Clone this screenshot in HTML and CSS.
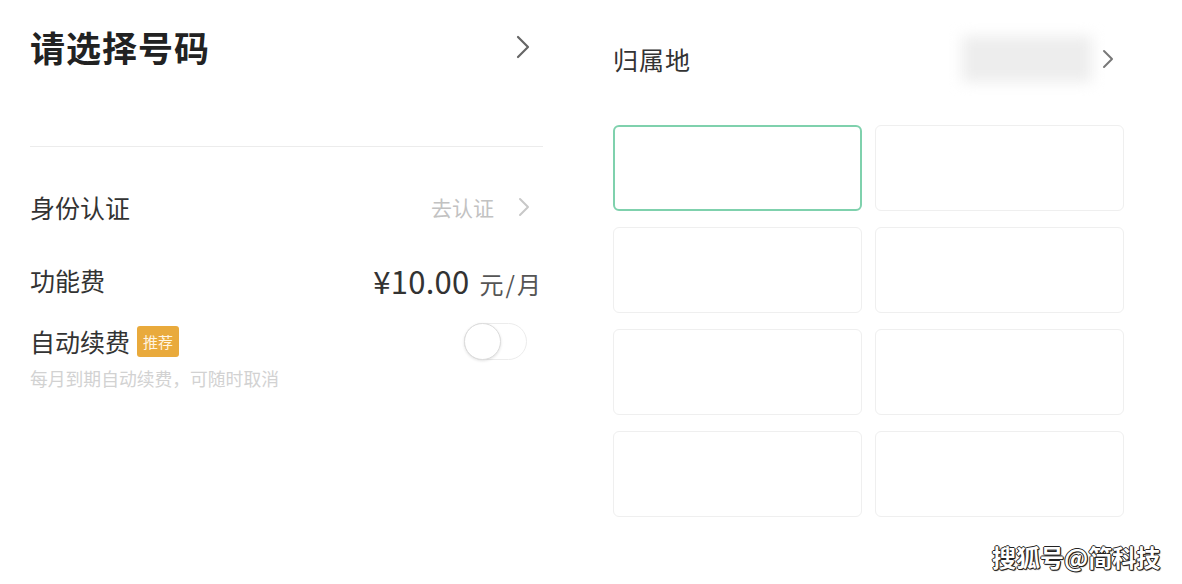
FILE: index.html
```html
<!DOCTYPE html>
<html lang="zh-CN">
<head>
<meta charset="utf-8">
<title>请选择号码</title>
<link rel="stylesheet" href="styles.css">
</head>
<body>
<div class="page">
  <section class="left">
    <div class="head">
      <h1 class="title">请选择号码</h1>
      <svg class="chev chev-big" viewBox="0 0 14 24" width="14" height="24"><polyline points="2,2 12,12 2,22" /></svg>
    </div>
    <div class="row row-auth">
      <span class="label">身份认证</span>
      <span class="link">去认证
        <svg class="chev chev-light" viewBox="0 0 12 20" width="12" height="20"><polyline points="2,2 10,10 2,18" /></svg>
      </span>
    </div>
    <div class="row row-fee">
      <span class="label">功能费</span>
      <span class="price"><span class="amount">¥10.00</span><span class="unit">元/月</span></span>
    </div>
    <div class="row row-renew">
      <span class="label">自动续费<span class="badge">推荐</span></span>
      <span class="toggle"><span class="knob"></span></span>
    </div>
    <p class="sub">每月到期自动续费，可随时取消</p>
  </section>
  <section class="right">
    <div class="loc">
      <span class="label label-loc">归属地</span>
      <span class="loc-value">
        <span class="blur"></span>
        <svg class="chev chev-mid" viewBox="0 0 12 20" width="12" height="20"><polyline points="2,2 10,10 2,18" /></svg>
      </span>
    </div>
    <div class="grid">
      <div class="card card-active"></div>
      <div class="card"></div>
      <div class="card"></div>
      <div class="card"></div>
      <div class="card"></div>
      <div class="card"></div>
      <div class="card"></div>
      <div class="card"></div>
    </div>
  </section>
  <div class="watermark">搜狐号@简科技</div>
</div>
</body>
</html>
```

FILE: styles.css
```css
* { box-sizing: border-box; }
html, body { margin: 0; padding: 0; background: #ffffff; }
body {
  font-family: "Noto Sans CJK SC", "Noto Sans", sans-serif;
  color: #333;
  width: 1182px;
  height: 584px;
  overflow: hidden;
}
.page {
  position: relative;
  display: flex;
  width: 1182px;
  height: 584px;
}
.left {
  width: 513px;
  margin-left: 30px;
  display: flex;
  flex-direction: column;
}
.head {
  height: 147px;
  border-bottom: 1px solid #ececec;
  display: flex;
  justify-content: space-between;
  align-items: flex-start;
  padding-top: 22px;
  padding-right: 13px;
}
.title {
  margin: 0;
  font-size: 35px;
  line-height: 50px;
  font-weight: 700;
  color: #222;
  letter-spacing: 1px;
}
.chev polyline {
  fill: none;
  stroke-linecap: round;
  stroke-linejoin: round;
}
.chev-big { margin-top: 13px; }
.chev-big polyline { stroke: #666; stroke-width: 2.2; }
.chev-light polyline { stroke: #c8c8c8; stroke-width: 2; }
.chev-mid polyline { stroke: #777; stroke-width: 2; }
.row {
  display: flex;
  justify-content: space-between;
  align-items: center;
  height: 48px;
}
.label {
  font-size: 25px;
  color: #333;
  display: flex;
  align-items: center;
}
.label-loc { letter-spacing: 1px; }
.row-auth { margin-top: 36px; padding-right: 13px; }
.link {
  display: flex;
  align-items: center;
  gap: 24px;
  font-size: 21px;
  color: #c2c2c2;
}
.row-fee { margin-top: 25px; }
.price { display: flex; align-items: baseline; }
.amount { font-size: 31px; color: #333; letter-spacing: 0.3px; }
.unit { font-size: 24px; color: #555; margin-left: 10px; letter-spacing: 2px; }
.row-renew { margin-top: 13px; padding-right: 16px; }
.badge {
  display: inline-flex;
  align-items: center;
  justify-content: center;
  margin-left: 7px;
  width: 42px;
  height: 31px;
  border-radius: 3px;
  background: #e9aa3c;
  color: #fff4e0;
  font-size: 15px;
}
.toggle {
  position: relative;
  width: 63px;
  height: 37px;
  border-radius: 19px;
  border: 1px solid #ececec;
  background: #fff;
}
.knob {
  position: absolute;
  left: -1px;
  top: -1px;
  width: 37px;
  height: 37px;
  border-radius: 50%;
  background: #fff;
  border: 1.5px solid #dcdcdc;
  box-shadow: 0 1px 3px rgba(0,0,0,0.12);
}
.sub {
  margin: 2px 0 0;
  font-size: 17.8px;
  line-height: 22px;
  color: #d2d2d2;
}
.right {
  margin-left: 70px;
  width: 511px;
  display: flex;
  flex-direction: column;
}
.loc {
  margin-top: 35px;
  height: 48px;
  display: flex;
  justify-content: space-between;
  align-items: center;
  padding-right: 10px;
}
.loc-value { display: flex; align-items: center; gap: 10px; }
.blur {
  display: block;
  width: 130px;
  height: 46px;
  background: #ededed;
  filter: blur(7px);
}
.grid {
  margin-top: 42px;
  display: grid;
  grid-template-columns: 249px 249px;
  grid-auto-rows: 86px;
  column-gap: 13px;
  row-gap: 16px;
}
.card {
  border: 1px solid #efefef;
  border-radius: 6px;
  background: #fff;
}
.card-active {
  border: 2px solid #7fd1ad;
}
.watermark {
  position: absolute;
  left: 992px;
  top: 540px;
  font-size: 24px;
  line-height: 34px;
  color: #fff;
  font-weight: 700;
  text-shadow: -1px 0 0 #222, 1px 0 0 #222, 0 -1px 0 #222, 0 1px 0 #222, 1px 1px 1px #000;
}
```
